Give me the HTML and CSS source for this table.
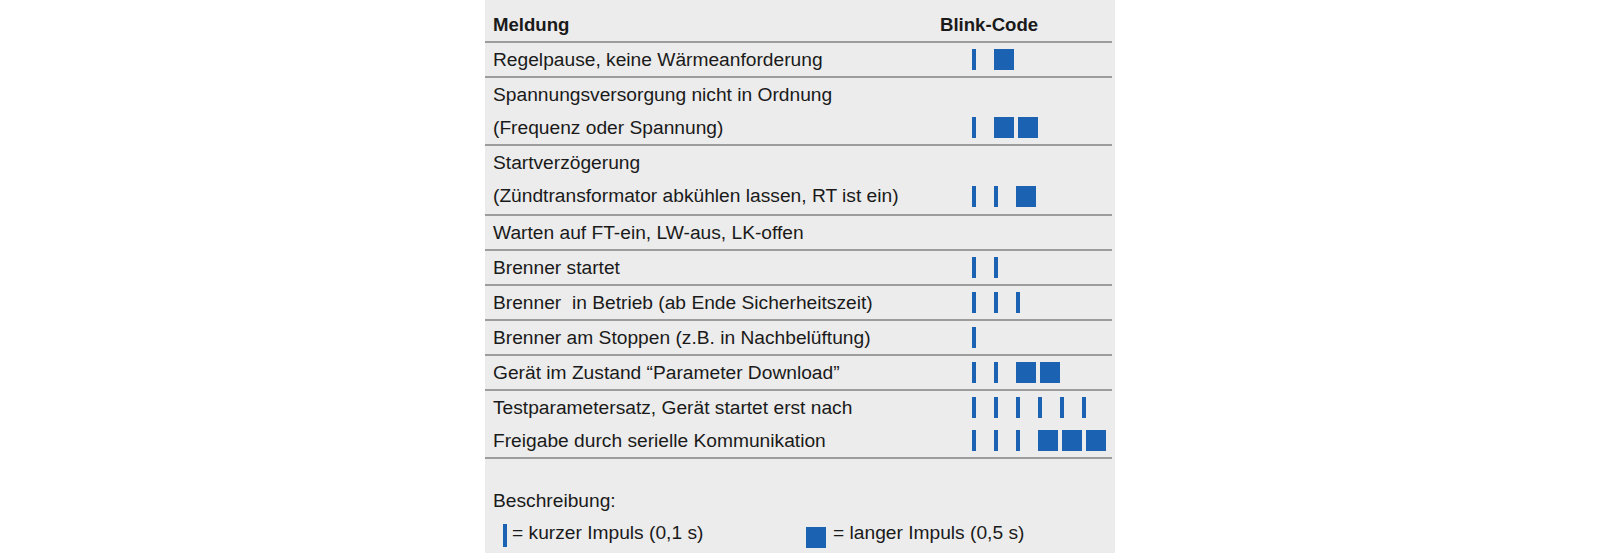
FILE: index.html
```html
<!DOCTYPE html>
<html lang="de">
<head>
<meta charset="utf-8">
<title>Blink-Code</title>
<link rel="stylesheet" href="styles.css">
</head>
<body>
<div class="panel">
  <div class="head">
    <div class="head-msg">Meldung</div>
    <div class="head-code">Blink-Code</div>
  </div>

  <div class="row">
    <div class="txt"><div class="ln">Regelpause, keine Wärmeanforderung</div></div>
    <div class="code"><div class="bl"><i class="s"></i><i class="l"></i></div></div>
  </div>

  <div class="row">
    <div class="txt"><div class="ln">Spannungsversorgung nicht in Ordnung</div><div class="ln">(Frequenz oder Spannung)</div></div>
    <div class="code"><div class="bl"><i class="s"></i><i class="l"></i><i class="l"></i></div></div>
  </div>

  <div class="row row-tall">
    <div class="txt"><div class="ln">Startverzögerung</div><div class="ln">(Zündtransformator abkühlen lassen, RT ist ein)</div></div>
    <div class="code"><div class="bl"><i class="s"></i><i class="s"></i><i class="l"></i></div></div>
  </div>

  <div class="row">
    <div class="txt"><div class="ln">Warten auf FT-ein, LW-aus, LK-offen</div></div>
    <div class="code"><div class="bl"></div></div>
  </div>

  <div class="row">
    <div class="txt"><div class="ln">Brenner startet</div></div>
    <div class="code"><div class="bl"><i class="s"></i><i class="s"></i></div></div>
  </div>

  <div class="row">
    <div class="txt"><div class="ln">Brenner&nbsp; in Betrieb (ab Ende Sicherheitszeit)</div></div>
    <div class="code"><div class="bl"><i class="s"></i><i class="s"></i><i class="s"></i></div></div>
  </div>

  <div class="row">
    <div class="txt"><div class="ln">Brenner am Stoppen (z.B. in Nachbelüftung)</div></div>
    <div class="code"><div class="bl"><i class="s"></i></div></div>
  </div>

  <div class="row">
    <div class="txt"><div class="ln">Gerät im Zustand “Parameter Download”</div></div>
    <div class="code"><div class="bl"><i class="s"></i><i class="s"></i><i class="l"></i><i class="l"></i></div></div>
  </div>

  <div class="row">
    <div class="txt"><div class="ln">Testparametersatz, Gerät startet erst nach</div><div class="ln">Freigabe durch serielle Kommunikation</div></div>
    <div class="code">
      <div class="bl"><i class="s"></i><i class="s"></i><i class="s"></i><i class="s"></i><i class="s"></i><i class="s"></i></div>
      <div class="bl"><i class="s"></i><i class="s"></i><i class="s"></i><i class="l"></i><i class="l"></i><i class="l"></i></div>
    </div>
  </div>

  <div class="legend">
    <div class="ln">Beschreibung:</div>
    <div class="leg-row">
      <div class="leg-item leg-first"><i class="s leg-s"></i><span>= kurzer Impuls (0,1 s)</span></div>
      <div class="leg-item"><i class="l leg-l"></i><span>= langer Impuls (0,5 s)</span></div>
    </div>
  </div>
</div>
</body>
</html>
```

FILE: styles.css
```css
html, body {
  margin: 0;
  padding: 0;
  background: #ffffff;
}

body {
  font-family: "Liberation Sans", Arial, sans-serif;
  font-size: 19.2px;
  color: #1a1a1a;
}

.panel {
  width: 630px;
  height: 553px;
  margin: 0 auto;
  background: #ececec;
  box-sizing: border-box;
  padding-top: 8px;
  overflow: hidden;
}

.head {
  width: 627px;
  display: grid;
  grid-template-columns: 455px 1fr;
  height: 33px;
  line-height: 33px;
  font-weight: bold;
  font-size: 18.6px;
  border-bottom: 2px solid #9c9c9c;
}

.head-msg {
  padding-left: 8px;
}

.row {
  width: 627px;
  display: grid;
  grid-template-columns: 487px 1fr;
  border-bottom: 2px solid #9c9c9c;
}

.row-tall .ln:last-child,
.row-tall .bl {
  height: 35px;
  line-height: 33px;
}

.txt {
  padding-left: 8px;
}

.ln {
  height: 33px;
  line-height: 33px;
  white-space: nowrap;
}

.code {
  display: flex;
  flex-direction: column;
  justify-content: flex-end;
}

.bl {
  height: 33px;
  display: flex;
  align-items: center;
}

.s, .l {
  display: block;
  background: #1b63b2;
  height: 21px;
  flex: none;
}

.s {
  width: 4px;
  margin-right: 18px;
}

.l {
  width: 20px;
  margin-right: 4px;
}

.legend {
  margin-top: 25px;
  padding-left: 8px;
}

.leg-row {
  display: flex;
  height: 33px;
  line-height: 33px;
  padding-left: 10px;
  margin-top: -1px;
}

.leg-item {
  display: flex;
  align-items: center;
  white-space: nowrap;
}

.leg-first {
  width: 303px;
}

.leg-s {
  height: 23px;
  margin-right: 5px;
  margin-top: 6px;
}

.leg-l {
  margin-right: 7px;
  margin-top: 10px;
}
```
